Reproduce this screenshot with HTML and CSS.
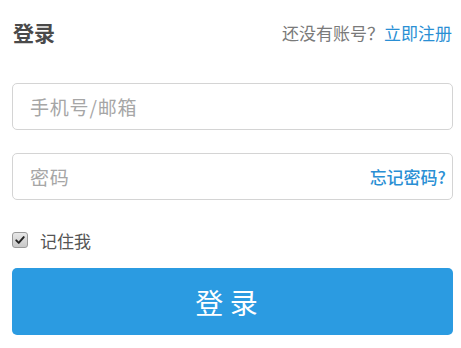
FILE: index.html
```html
<!DOCTYPE html>
<html lang="zh-CN">
<head>
<meta charset="utf-8">
<title>登录</title>
<link rel="stylesheet" href="styles.css">
</head>
<body>
<div class="page">
  <div class="header">
    <h1 class="title">登录</h1>
    <div class="signup">还没有账号？<a class="link" href="#">立即注册</a></div>
  </div>
  <div class="field field-first">
    <span class="placeholder">手机号/邮箱</span>
  </div>
  <div class="field field-second">
    <span class="placeholder">密码</span>
    <a class="forgot" href="#">忘记密码?</a>
  </div>
  <label class="remember">
    <span class="check"><svg viewBox="0 0 16 16" width="12" height="12"><path d="M3 8.5 L6.3 11.8 L13 4.2" fill="none" stroke="#222" stroke-width="2.6" stroke-linecap="round" stroke-linejoin="round"/></svg></span>
    <span class="remember-text">记住我</span>
  </label>
  <button class="submit">登 录</button>
</div>
</body>
</html>
```
FILE: styles.css
```css
html, body {
  margin: 0;
  padding: 0;
  background: #fff;
}
body {
  font-family: "Noto Sans CJK SC", "Noto Sans", sans-serif;
}
.page {
  padding: 14px 8px 0 12px;
}
.header {
  display: flex;
  justify-content: space-between;
  align-items: center;
  height: 36px;
}
.title {
  margin: 0 0 0 1px;
  font-size: 21px;
  font-weight: bold;
  color: #4a4a4a;
  line-height: 1;
}
.signup {
  font-size: 17px;
  color: #7a7a7a;
  line-height: 1;
  margin-right: 1px;
}
.link {
  color: #2a8fd4;
  text-decoration: none;
}
.field {
  box-sizing: border-box;
  height: 47px;
  border: 1px solid #d4d4d4;
  border-radius: 5px;
  display: flex;
  align-items: center;
  justify-content: space-between;
  padding: 0 6px 0 17px;
}
.field-first {
  margin-top: 33px;
}
.field-second {
  margin-top: 23px;
}
.placeholder {
  font-size: 19px;
  letter-spacing: 0.8px;
  color: #a6a6a6;
}
.forgot {
  font-size: 17px;
  color: #2a8fd4;
  text-decoration: none;
  font-weight: 500;
}
.remember {
  display: flex;
  align-items: center;
  margin-top: 32px;
  height: 16px;
}
.check {
  box-sizing: border-box;
  width: 16px;
  height: 16px;
  border: 1px solid #9a9a9a;
  border-radius: 3px;
  background: linear-gradient(#e8e8e8, #c8c8c8);
  display: flex;
  align-items: center;
  justify-content: center;
}
.remember-text {
  margin-left: 12px;
  font-size: 17px;
  color: #555;
  line-height: 1;
}
.submit {
  display: block;
  box-sizing: border-box;
  width: 100%;
  height: 67px;
  margin-top: 20px;
  border: none;
  border-radius: 5px;
  background: #2b9be1;
  color: #fff;
  font-family: "Noto Sans CJK SC", "Noto Sans", sans-serif;
  font-size: 28px;
  padding: 0 12px 0 0;
}
```
